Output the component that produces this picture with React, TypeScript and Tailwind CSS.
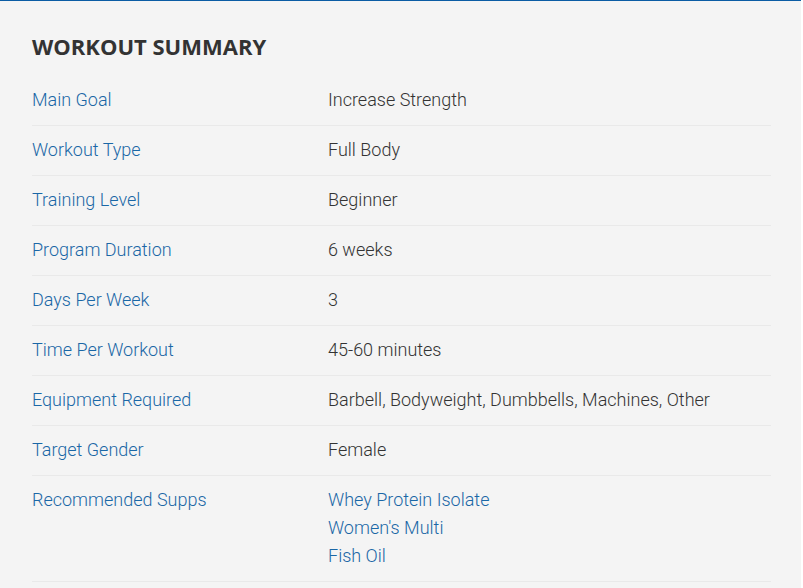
const ROWS: [string, string[]][] = [
  ['Main Goal', ['Increase Strength']],
  ['Workout Type', ['Full Body']],
  ['Training Level', ['Beginner']],
  ['Program Duration', ['6 weeks']],
  ['Days Per Week', ['3']],
  ['Time Per Workout', ['45-60 minutes']],
  ['Equipment Required', ['Barbell, Bodyweight, Dumbbells, Machines, Other']],
  ['Target Gender', ['Female']],
]

const SUPPS = ['Whey Protein Isolate', "Women's Multi", 'Fish Oil']

export default function App() {
  return (
    <div className="h-[588px] w-[803px] bg-white">
      <div className="mr-[2px] h-full border-t border-[#0b5ca4] bg-[#f4f4f4] pl-[32px] pr-[30px] pt-[31px]">
        <h2 className="font-['Open_Sans',sans-serif] text-[22px] font-bold leading-[28px] text-[#333]">
          WORKOUT SUMMARY
        </h2>
        <div className="mt-[16px] font-['Roboto',sans-serif] text-[18px] font-light leading-[28px]">
          {ROWS.map(([label, vals]) => (
            <div key={label} className="flex border-b border-[#e9e9e9] pt-[10px] pb-[11px]">
              <div className="w-[296px] text-[#1a67a6]">{label}</div>
              <div className="text-[#333]">{vals[0]}</div>
            </div>
          ))}
          <div className="flex border-b border-[#e9e9e9] pt-[10px] pb-[11px]">
            <div className="w-[296px] text-[#1a67a6]">Recommended Supps</div>
            <div className="flex flex-col text-[#1a67a6]">
              {SUPPS.map((s) => (
                <span key={s}>{s}</span>
              ))}
            </div>
          </div>
        </div>
      </div>
    </div>
  )
}
